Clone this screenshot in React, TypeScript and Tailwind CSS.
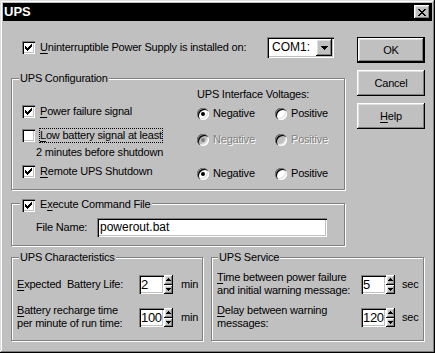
import React from "react";

const sunken =
  "shadow-[inset_1px_1px_0_#808080,inset_2px_2px_0_#000,inset_-1px_-1px_0_#fff,inset_-2px_-2px_0_#c0c0c0]";
const raised =
  "shadow-[inset_-1px_-1px_0_#000,inset_1px_1px_0_#fff,inset_-2px_-2px_0_#808080,inset_2px_2px_0_#dfdfdf]";
const etched = "border border-[#808080] shadow-[inset_1px_1px_0_#fff,1px_1px_0_#fff]";

const CHECK = ["......X", ".....XX", "X...XXX", "XX.XXX.", "XXXXX..", ".XXX...", "..X...."];
const CLOSE = ["XX....XX", ".XX..XX.", "..XXXX..", "...XX...", "..XXXX..", ".XX..XX.", "XX....XX"];
const DOWN = ["XXXXXXX", ".XXXXX.", "..XXX..", "...X..."];
const SUP = ["..X..", ".XXX.", "XXXXX"];
const SDOWN = ["XXXXX", ".XXX.", "..X.."];

function Pix({ rows, color = "#000" }: { rows: string[]; color?: string }) {
  const h = rows.length;
  const w = rows[0].length;
  return (
    <svg width={w} height={h} viewBox={`0 0 ${w} ${h}`} shapeRendering="crispEdges" className="block">
      {rows.flatMap((r, y) =>
        [...r].map((c, x) =>
          c === "X" ? <rect key={`${x}-${y}`} x={x} y={y} width={1} height={1} fill={color} /> : null
        )
      )}
    </svg>
  );
}

function Check({ checked }: { checked?: boolean }) {
  return (
    <span className={`w-[13px] h-[13px] shrink-0 bg-white ${sunken} flex items-center justify-center`}>
      {checked && <Pix rows={CHECK} />}
    </span>
  );
}

function Radio({ checked, disabled }: { checked?: boolean; disabled?: boolean }) {
  return (
    <span
      className={`w-[12px] h-[12px] shrink-0 rounded-full ${
        disabled ? "bg-[#c0c0c0]" : "bg-white"
      } shadow-[inset_1px_1px_0_#808080,inset_2px_2px_0_#000,inset_-1px_-1px_0_#fff,inset_-2px_-2px_0_#dfdfdf] flex items-center justify-center`}
    >
      {checked && (
        <span className={`w-[4px] h-[4px] rounded-full ${disabled ? "bg-[#808080]" : "bg-black"}`} />
      )}
    </span>
  );
}

function RadioRow({ neg, disabled }: { neg?: boolean; disabled?: boolean }) {
  const txt = disabled ? "text-[#808080] [text-shadow:1px_1px_0_#fff]" : "";
  return (
    <div className="flex h-[13px] items-center">
      <div className="w-[78px] flex items-center gap-[4px]">
        <Radio checked={neg} disabled={disabled} />
        <span className={txt}>Negative</span>
      </div>
      <div className="flex items-center gap-[4px]">
        <Radio disabled={disabled} />
        <span className={txt}>Positive</span>
      </div>
    </div>
  );
}

function Btn({ children, def }: { children: React.ReactNode; def?: boolean }) {
  if (def)
    return (
      <div className="w-[68px] h-[26px] border border-black">
        <div className={`w-full h-full ${raised} flex items-center justify-center`}>{children}</div>
      </div>
    );
  return <div className={`w-[68px] h-[26px] ${raised} flex items-center justify-center`}>{children}</div>;
}

function Spinner({ value }: { value: string }) {
  return (
    <div className="flex h-[19px]">
      <div className={`w-[25px] h-[19px] bg-white ${sunken} pl-[2px] flex items-center text-[13px] tracking-[-0.3px]`}>
        {value}
      </div>
      <div className="w-[9px] h-[19px] flex flex-col">
        <div className={`h-[10px] bg-[#c0c0c0] ${raised} flex items-center justify-center`}>
          <Pix rows={SUP} />
        </div>
        <div className={`h-[9px] bg-[#c0c0c0] ${raised} flex items-center justify-center`}>
          <Pix rows={SDOWN} />
        </div>
      </div>
    </div>
  );
}

function U({ children }: { children: React.ReactNode }) {
  return <span className="underline underline-offset-[2px]">{children}</span>;
}

export default function App() {
  return (
    <div
      className="w-[435px] h-[353px] bg-[#c0c0c0] p-[3px] flex flex-col text-black text-[11px] leading-[13px] tracking-[-0.2px] font-['Liberation_Sans',Arial,sans-serif] shadow-[inset_-1px_-1px_0_#000,inset_1px_1px_0_#dfdfdf,inset_-2px_-2px_0_#808080,inset_2px_2px_0_#fff]"
    >
      {/* Title bar */}
      <div className="h-[18px] bg-black flex items-center pl-[1px] shrink-0">
        <span className="text-white font-bold text-[13px] tracking-normal leading-[16px]">UPS</span>
        <div className={`ml-auto mr-[2px] w-[16px] h-[14px] bg-[#c0c0c0] ${raised} flex items-center justify-center`}>
          <Pix rows={CLOSE} />
        </div>
      </div>

      {/* Body */}
      <div className="pl-[8px] pt-[16px]">
        <div className="flex">
          <div className="w-[334px] flex flex-col">
            {/* Row 1 */}
            <div className="h-[21px] flex items-center justify-between pl-[11px] pr-[11px]">
              <div className="flex items-center gap-[5px]">
                <Check checked />
                <span>
                  <U>U</U>ninterruptible Power Supply is installed on:
                </span>
              </div>
              <div className={`w-[67px] h-[21px] bg-white ${sunken} flex items-center`}>
                <span className="pl-[5px] text-[12px] tracking-normal">COM1:</span>
                <div className={`ml-auto mr-[2px] w-[16px] h-[17px] bg-[#c0c0c0] ${raised} flex items-center justify-center`}>
                  <Pix rows={DOWN} />
                </div>
              </div>
            </div>

            {/* UPS Configuration */}
            <div className={`relative mt-[20px] h-[112px] ${etched} flex`}>
              <span className="absolute left-[7px] top-[-7px] px-[1px] bg-[#c0c0c0]">UPS Configuration</span>
              <div className="w-[175px] pl-[10px] pt-[26px] flex flex-col">
                <div className="flex items-center gap-[5px] h-[13px]">
                  <Check checked />
                  <span>
                    <U>P</U>ower failure signal
                  </span>
                </div>
                <div className="flex items-center gap-[4px] mt-[10px]">
                  <Check />
                  <span className="border border-dotted border-black leading-[13px]">
                    <U>L</U>ow battery signal at least
                  </span>
                </div>
                <div className="ml-[14px] mt-[3px]">2 minutes before shutdown</div>
                <div className="flex items-center gap-[5px] h-[13px] mt-[6px]">
                  <Check checked />
                  <span>
                    <U>R</U>emote UPS Shutdown
                  </span>
                </div>
              </div>
              <div className="pl-[10px] pt-[9px] flex flex-col">
                <div>UPS Interface Voltages:</div>
                <div className="mt-[6px]">
                  <RadioRow neg />
                </div>
                <div className="mt-[13px]">
                  <RadioRow neg disabled />
                </div>
                <div className="mt-[21px]">
                  <RadioRow neg />
                </div>
              </div>
            </div>

            {/* Execute Command File */}
            <div className={`relative mt-[13px] h-[43px] ${etched} pl-[24px] pt-[14px]`}>
              <div className="absolute left-[8px] top-[-5px] px-[2px] bg-[#c0c0c0] flex items-center gap-[5px]">
                <Check checked />
                <span className="mt-[-2px]">
                  E<U>x</U>ecute Command File
                </span>
              </div>
              <div className="flex items-center">
                <span className="w-[61px]">File Name:</span>
                <div className={`w-[230px] h-[19px] bg-white ${sunken} pl-[3px] flex items-center text-[12px] tracking-normal`}>
                  powerout.bat
                </div>
              </div>
            </div>
          </div>

          {/* Buttons */}
          <div className="ml-[12px] flex flex-col gap-[7px]">
            <Btn def>OK</Btn>
            <Btn>Cancel</Btn>
            <Btn>
              <span>
                <U>H</U>elp
              </span>
            </Btn>
          </div>
        </div>

        {/* Bottom groups */}
        <div className="flex gap-[8px] mt-[11px]">
          <div className={`relative w-[192px] h-[84px] ${etched} pl-[5px] pt-[13px] flex flex-col gap-[7px]`}>
            <span className="absolute left-[7px] top-[-7px] px-[1px] bg-[#c0c0c0]">UPS Characteristics</span>
            <div className="h-[26px] flex items-center">
              <span className="w-[122px] whitespace-pre">
                <U>E</U>xpected  Battery Life:
              </span>
              <Spinner value="2" />
              <span className="ml-[8px]">min</span>
            </div>
            <div className="h-[26px] flex items-center">
              <span className="w-[122px]">
                <U>B</U>attery recharge time
                <br />
                per minute of run time:
              </span>
              <Spinner value="100" />
              <span className="ml-[8px]">min</span>
            </div>
          </div>

          <div className={`relative w-[213px] h-[84px] ${etched} pl-[5px] pt-[13px] flex flex-col gap-[7px]`}>
            <span className="absolute left-[6px] top-[-7px] px-[1px] bg-[#c0c0c0]">UPS Service</span>
            <div className="h-[26px] flex items-center">
              <span className="w-[144px]">
                <U>T</U>ime between power failure
                <br />
                and initial warning message:
              </span>
              <Spinner value="5" />
              <span className="ml-[7px]">sec</span>
            </div>
            <div className="h-[26px] flex items-center">
              <span className="w-[144px]">
                <U>D</U>elay between warning
                <br />
                messages:
              </span>
              <Spinner value="120" />
              <span className="ml-[7px]">sec</span>
            </div>
          </div>
        </div>
      </div>
    </div>
  );
}
